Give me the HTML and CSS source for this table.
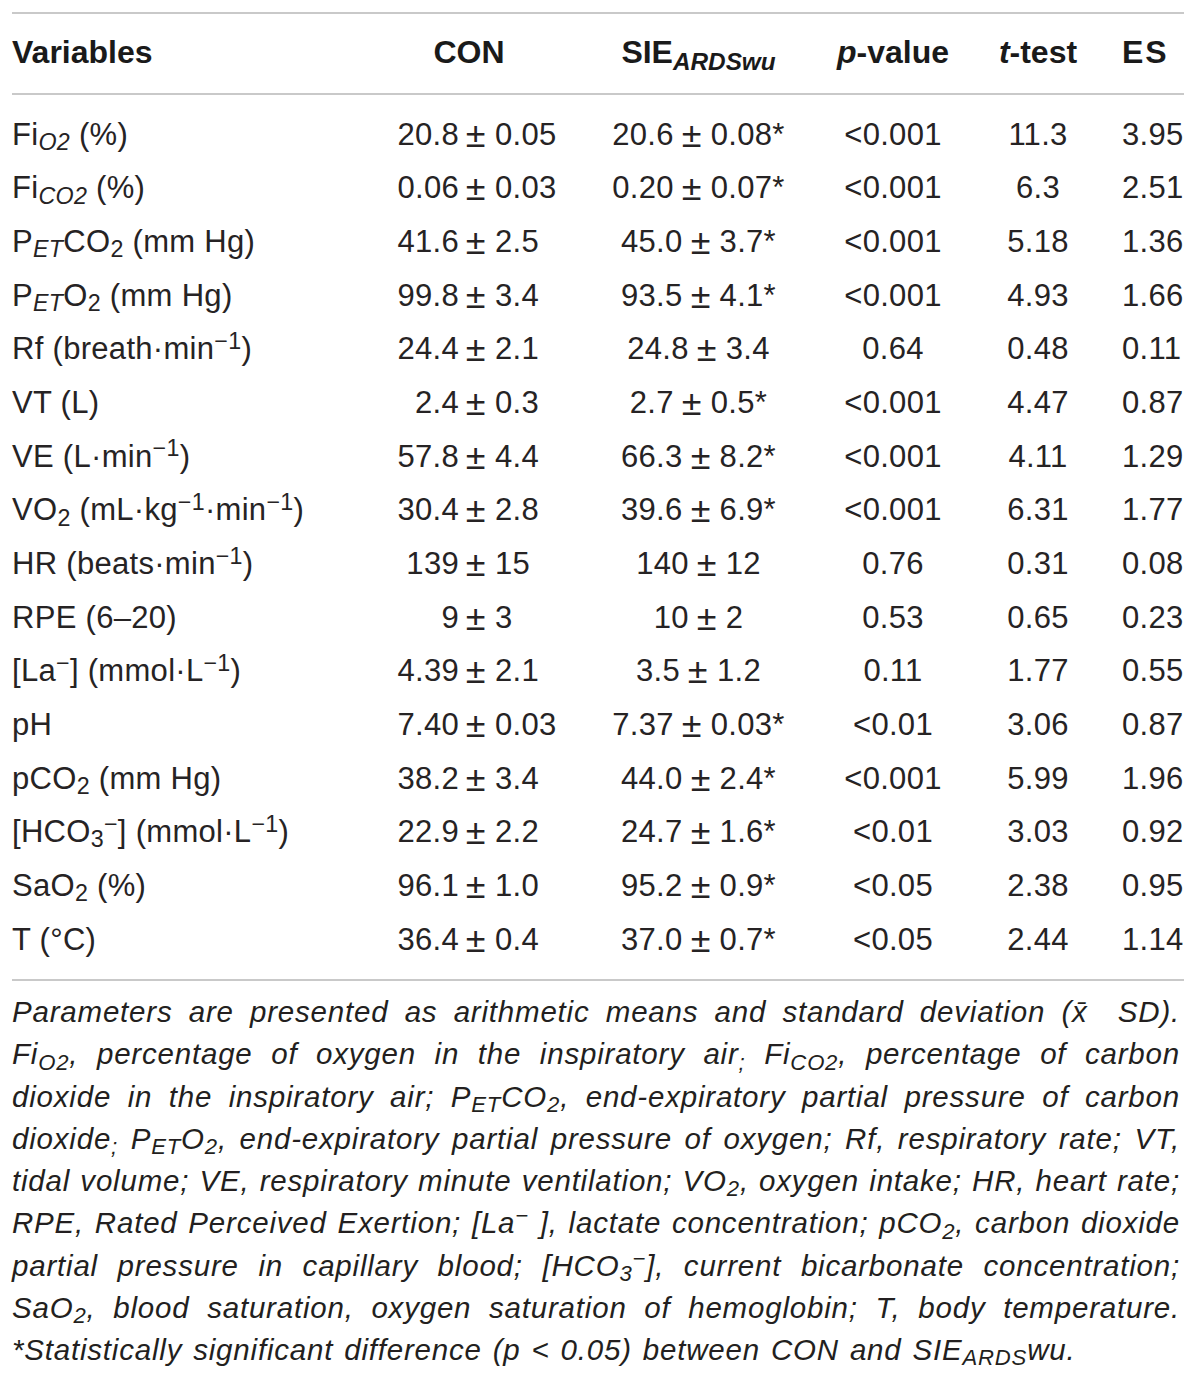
FILE: index.html
```html
<!DOCTYPE html>
<html lang="en">
<head>
<meta charset="utf-8">
<title>Table</title>
<link rel="stylesheet" href="styles.css">
</head>
<body>
<div class="page">
  <div class="tbl">
    <div class="row thead">
      <div class="c-var">Variables</div>
      <div class="c-conh">CON</div>
      <div class="c-sie">SIE<sub class="hsub">ARDSwu</sub></div>
      <div class="c-p"><i>p</i>-value</div>
      <div class="c-t"><i>t</i>-test</div>
      <div class="c-es">ES</div>
    </div>
    <div class="tbody">
      <div class="row">
        <div class="c-var">Fi<sub class="si">O2</sub> (%)</div>
        <div class="c-con"><span class="l">20.8</span><span class="pm">±</span><span class="r">0.05</span></div>
        <div class="c-sie">20.6<span class="pm2">±</span>0.08*</div>
        <div class="c-p">&lt;0.001</div>
        <div class="c-t">11.3</div>
        <div class="c-es">3.95</div>
      </div>
      <div class="row">
        <div class="c-var">Fi<sub class="si">CO2</sub> (%)</div>
        <div class="c-con"><span class="l">0.06</span><span class="pm">±</span><span class="r">0.03</span></div>
        <div class="c-sie">0.20<span class="pm2">±</span>0.07*</div>
        <div class="c-p">&lt;0.001</div>
        <div class="c-t">6.3</div>
        <div class="c-es">2.51</div>
      </div>
      <div class="row">
        <div class="c-var">P<sub class="si">ET</sub>CO<sub>2</sub> (mm Hg)</div>
        <div class="c-con"><span class="l">41.6</span><span class="pm">±</span><span class="r">2.5</span></div>
        <div class="c-sie">45.0<span class="pm2">±</span>3.7*</div>
        <div class="c-p">&lt;0.001</div>
        <div class="c-t">5.18</div>
        <div class="c-es">1.36</div>
      </div>
      <div class="row">
        <div class="c-var">P<sub class="si">ET</sub>O<sub>2</sub> (mm Hg)</div>
        <div class="c-con"><span class="l">99.8</span><span class="pm">±</span><span class="r">3.4</span></div>
        <div class="c-sie">93.5<span class="pm2">±</span>4.1*</div>
        <div class="c-p">&lt;0.001</div>
        <div class="c-t">4.93</div>
        <div class="c-es">1.66</div>
      </div>
      <div class="row">
        <div class="c-var">Rf (breath·min<sup>−1</sup>)</div>
        <div class="c-con"><span class="l">24.4</span><span class="pm">±</span><span class="r">2.1</span></div>
        <div class="c-sie">24.8<span class="pm2">±</span>3.4</div>
        <div class="c-p">0.64</div>
        <div class="c-t">0.48</div>
        <div class="c-es">0.11</div>
      </div>
      <div class="row">
        <div class="c-var">VT (L)</div>
        <div class="c-con"><span class="l">2.4</span><span class="pm">±</span><span class="r">0.3</span></div>
        <div class="c-sie">2.7<span class="pm2">±</span>0.5*</div>
        <div class="c-p">&lt;0.001</div>
        <div class="c-t">4.47</div>
        <div class="c-es">0.87</div>
      </div>
      <div class="row">
        <div class="c-var">VE (L·min<sup>−1</sup>)</div>
        <div class="c-con"><span class="l">57.8</span><span class="pm">±</span><span class="r">4.4</span></div>
        <div class="c-sie">66.3<span class="pm2">±</span>8.2*</div>
        <div class="c-p">&lt;0.001</div>
        <div class="c-t">4.11</div>
        <div class="c-es">1.29</div>
      </div>
      <div class="row">
        <div class="c-var">VO<sub>2</sub> (mL·kg<sup>−1</sup>·min<sup>−1</sup>)</div>
        <div class="c-con"><span class="l">30.4</span><span class="pm">±</span><span class="r">2.8</span></div>
        <div class="c-sie">39.6<span class="pm2">±</span>6.9*</div>
        <div class="c-p">&lt;0.001</div>
        <div class="c-t">6.31</div>
        <div class="c-es">1.77</div>
      </div>
      <div class="row">
        <div class="c-var">HR (beats·min<sup>−1</sup>)</div>
        <div class="c-con"><span class="l">139</span><span class="pm">±</span><span class="r">15</span></div>
        <div class="c-sie">140<span class="pm2">±</span>12</div>
        <div class="c-p">0.76</div>
        <div class="c-t">0.31</div>
        <div class="c-es">0.08</div>
      </div>
      <div class="row">
        <div class="c-var">RPE (6–20)</div>
        <div class="c-con"><span class="l">9</span><span class="pm">±</span><span class="r">3</span></div>
        <div class="c-sie">10<span class="pm2">±</span>2</div>
        <div class="c-p">0.53</div>
        <div class="c-t">0.65</div>
        <div class="c-es">0.23</div>
      </div>
      <div class="row">
        <div class="c-var">[La<sup>−</sup>] (mmol·L<sup>−1</sup>)</div>
        <div class="c-con"><span class="l">4.39</span><span class="pm">±</span><span class="r">2.1</span></div>
        <div class="c-sie">3.5<span class="pm2">±</span>1.2</div>
        <div class="c-p">0.11</div>
        <div class="c-t">1.77</div>
        <div class="c-es">0.55</div>
      </div>
      <div class="row">
        <div class="c-var">pH</div>
        <div class="c-con"><span class="l">7.40</span><span class="pm">±</span><span class="r">0.03</span></div>
        <div class="c-sie">7.37<span class="pm2">±</span>0.03*</div>
        <div class="c-p">&lt;0.01</div>
        <div class="c-t">3.06</div>
        <div class="c-es">0.87</div>
      </div>
      <div class="row">
        <div class="c-var">pCO<sub>2</sub> (mm Hg)</div>
        <div class="c-con"><span class="l">38.2</span><span class="pm">±</span><span class="r">3.4</span></div>
        <div class="c-sie">44.0<span class="pm2">±</span>2.4*</div>
        <div class="c-p">&lt;0.001</div>
        <div class="c-t">5.99</div>
        <div class="c-es">1.96</div>
      </div>
      <div class="row">
        <div class="c-var">[HCO<sub>3</sub><sup>−</sup>] (mmol·L<sup>−1</sup>)</div>
        <div class="c-con"><span class="l">22.9</span><span class="pm">±</span><span class="r">2.2</span></div>
        <div class="c-sie">24.7<span class="pm2">±</span>1.6*</div>
        <div class="c-p">&lt;0.01</div>
        <div class="c-t">3.03</div>
        <div class="c-es">0.92</div>
      </div>
      <div class="row">
        <div class="c-var">SaO<sub>2</sub> (%)</div>
        <div class="c-con"><span class="l">96.1</span><span class="pm">±</span><span class="r">1.0</span></div>
        <div class="c-sie">95.2<span class="pm2">±</span>0.9*</div>
        <div class="c-p">&lt;0.05</div>
        <div class="c-t">2.38</div>
        <div class="c-es">0.95</div>
      </div>
      <div class="row">
        <div class="c-var">T (°C)</div>
        <div class="c-con"><span class="l">36.4</span><span class="pm">±</span><span class="r">0.4</span></div>
        <div class="c-sie">37.0<span class="pm2">±</span>0.7*</div>
        <div class="c-p">&lt;0.05</div>
        <div class="c-t">2.44</div>
        <div class="c-es">1.14</div>
      </div>
    </div>
  </div>
  <div class="caption">
    <div class="cl">Parameters are presented as arithmetic means and standard deviation (x̄<span class="gap"></span> SD).</div>
    <div class="cl">Fi<sub>O2</sub>, percentage of oxygen in the inspiratory air<sub>;</sub> Fi<sub>CO2</sub>, percentage of carbon</div>
    <div class="cl">dioxide in the inspiratory air; P<sub>ET</sub>CO<sub>2</sub>, end-expiratory partial pressure of carbon</div>
    <div class="cl">dioxide<sub>;</sub> P<sub>ET</sub>O<sub>2</sub>, end-expiratory partial pressure of oxygen; Rf, respiratory rate; VT,</div>
    <div class="cl">tidal volume; VE, respiratory minute ventilation; VO<sub>2</sub>, oxygen intake; HR, heart rate;</div>
    <div class="cl">RPE, Rated Perceived Exertion; [La<sup>−</sup> ], lactate concentration; pCO<sub>2</sub>, carbon dioxide</div>
    <div class="cl">partial pressure in capillary blood; [HCO<sub>3</sub><sup>−</sup>], current bicarbonate concentration;</div>
    <div class="cl">SaO<sub>2</sub>, blood saturation, oxygen saturation of hemoglobin; T, body temperature.</div>
    <div class="cl last">*Statistically significant difference (p &lt; 0.05) between CON and SIE<sub>ARDS</sub>wu.</div>
  </div>
</div>
</body>
</html>
```

FILE: styles.css
```css
* { box-sizing: border-box; }
html, body { margin: 0; padding: 0; background: #ffffff; }
body {
  font-family: "Liberation Sans", Arial, Helvetica, sans-serif;
  color: #262324;
}
.page { width: 1200px; padding: 12px 12px 0 12px; }
.tbl { width: 1176px; }
.row {
  display: grid;
  grid-template-columns: 359px 212px 231px 158px 132px 84px;
  align-items: center;
  white-space: nowrap;
}
.thead {
  height: 83px;
  padding-bottom: 2px;
  border-top: 2px solid #c9c9c9;
  border-bottom: 2px solid #c9c9c9;
  font-weight: bold;
  font-size: 32px;
  color: #1a1a1a;
  width: 1172px;
}
.tbody {
  padding: 13px 0 12px;
  border-bottom: 2px solid #c9c9c9;
  width: 1172px;
  font-size: 31px;
  letter-spacing: 0.3px;
}
.tbody .row { height: 53.67px; }
.c-var { text-align: left; }
.c-conh { text-align: center; padding-right: 16px; }
.c-con { display: grid; grid-template-columns: 1fr auto 1fr; align-items: baseline; }
.c-con .l { text-align: right; }
.c-con .r { text-align: left; }
.pm { margin: 0 11px 0 8px; letter-spacing: 0; transform: scale(1.16); }
.pm2 { display: inline-block; margin: 0 11px 0 9px; letter-spacing: 0; transform: scale(1.16); }
.c-sie, .c-p, .c-t { text-align: center; }
.c-es { text-align: left; padding-left: 18px; }
.thead .c-es { letter-spacing: 2px; }

sub, sup { font-size: 0.75em; line-height: 0; position: relative; vertical-align: baseline; }
sub { top: 0.22em; }
sup { top: -0.45em; }
.si { font-style: italic; }
.hsub { font-style: italic; font-size: 0.76em; top: 0.28em; }

.caption {
  margin-top: 10.6px;
  width: 1168px;
  font-style: italic;
  font-size: 29.5px;
  line-height: 42.25px;
  letter-spacing: 0.8px;
  color: #231f20;
}
.cl { text-align: justify; text-align-last: justify; }
.cl.last { text-align: left; text-align-last: left; word-spacing: 2px; }
.caption sub { font-size: 0.75em; top: 0.24em; }
.gap { display: inline-block; width: 14px; }
```
